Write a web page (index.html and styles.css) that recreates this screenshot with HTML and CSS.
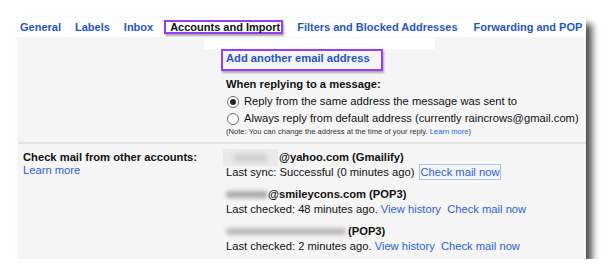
FILE: index.html
```html
<!DOCTYPE html>
<html lang="en">
<head>
    <meta charset="UTF-8">
    <meta name="viewport" content="width=device-width, initial-scale=1.0">
    <title>Settings - Accounts and Import</title>
    <link rel="stylesheet" href="styles.css">
</head>
<body>
    <div class="panel">
        <!-- settings tabs -->
        <div class="tabs">
            <a class="tab">General</a>
            <a class="tab">Labels</a>
            <a class="tab">Inbox</a>
            <a class="tab tab-active">Accounts and Import</a>
            <a class="tab">Filters and Blocked Addresses</a>
            <a class="tab tab-last">Forwarding and POP</a>
        </div>

        <div class="content">
            <div class="strip"></div>

            <!-- reply settings -->
            <div class="section section-reply">
                <div class="label-cell"></div>
                <div class="value-cell">
                    <a class="add-address">Add another email address</a>
                    <div class="heading heading-reply">When replying to a message:</div>
                    <div class="radio-row"><span class="radio checked"></span>Reply from the same address the message was sent to</div>
                    <div class="radio-row"><span class="radio"></span>Always reply from default address (currently raincrows@gmail.com)</div>
                    <div class="note">(Note: You can change the address at the time of your reply. <a class="link">Learn more</a>)</div>
                </div>
            </div>

            <!-- other accounts -->
            <div class="section section-accounts">
                <div class="label-cell">
                    <div class="heading heading-accounts">Check mail from other accounts:</div>
                    <a class="link">Learn more</a>
                </div>
                <div class="value-cell">
                    <div class="account">
                        <div class="account-name"><span class="redact redact-yahoo"><span class="blob"></span></span>@yahoo.com (Gmailify)</div>
                        <div class="account-status">Last sync: Successful (0 minutes ago) <a class="link link-boxed">Check mail now</a></div>
                    </div>
                    <div class="account">
                        <div class="account-name"><span class="redact redact-smiley"><span class="blob"></span></span>@smileycons.com (POP3)</div>
                        <div class="account-status">Last checked: 48 minutes ago. <a class="link">View history</a>&nbsp; <a class="link">Check mail now</a></div>
                    </div>
                    <div class="account">
                        <div class="account-name"><span class="redact redact-thunder"><span class="blob"></span></span>(POP3)</div>
                        <div class="account-status">Last checked: 2 minutes ago. <a class="link">View history</a>&nbsp; <a class="link">Check mail now</a></div>
                    </div>
                </div>
            </div>
        </div>
    </div>
</body>
</html>
```

FILE: styles.css
```css
body {
    margin: 0;
    background-color: #ffffff;
    font-family: "Liberation Sans", Arial, sans-serif;
    font-size: 11.2px;
    color: #111111;
}
a {
    cursor: pointer;
}
.panel {
    width: 568px;
    margin: 18px 0 0 18px;
    background-color: #f5f5f5;
    box-shadow: 6px 6px 7px rgba(0, 0, 0, 0.7);
}
.tabs {
    display: flex;
    align-items: center;
    gap: 14px;
    height: 19px;
    padding-left: 2px;
    background-color: #ffffff;
    white-space: nowrap;
    overflow: hidden;
}
.tab {
    font-size: 11px;
    font-weight: bold;
    color: #1f55c6;
    line-height: 19px;
}
.tab-active {
    color: #111111;
    line-height: 10px;
    margin-left: -3px;
    margin-top: -2px;
    padding: 0 1px 0 4px;
    border: 2px solid #9a3cf0;
    box-shadow: 1px 2px 2px rgba(0, 0, 0, 0.35);
}
.tab-last {
    margin-left: 2px;
}
.content {
    padding-top: 1px;
}
.strip {
    width: 231px;
    height: 11px;
    margin-left: 186px;
    background-color: #ffffff;
}
.section {
    display: grid;
    grid-template-columns: 208px 1fr;
}
.label-cell {
    padding-left: 5px;
}
.heading {
    font-weight: bold;
    line-height: 16px;
}
.link {
    color: #2b5fd4;
}
.section-reply {
    padding-bottom: 6px;
}
.add-address {
    display: inline-block;
    margin-left: -5px;
    padding: 1px 11px 5px 3px;
    border: 2px solid #9a3cf0;
    box-shadow: 1px 2px 2px rgba(0, 0, 0, 0.3);
    font-weight: bold;
    color: #1f55c6;
    line-height: 12px;
}
.heading-reply {
    margin-top: 5px;
    line-height: 17px;
}
.radio-row {
    display: flex;
    align-items: center;
    line-height: 17px;
}
.radio {
    width: 10px;
    height: 10px;
    margin: 0 5px 0 1px;
    border: 1px solid #6a6a6a;
    border-radius: 50%;
    background-color: #ffffff;
    position: relative;
}
.radio.checked::after {
    content: "";
    position: absolute;
    left: 2px;
    top: 2px;
    width: 6px;
    height: 6px;
    border-radius: 50%;
    background-color: #222222;
}
.note {
    font-size: 7.6px;
    line-height: 9px;
    color: #333333;
}
.section-accounts {
    border-top: 2px solid #e2e2e2;
    padding: 6px 0 0;
}
.heading-accounts {
    line-height: 13px;
    margin-top: 1px;
}
.account {
    margin-bottom: 7px;
    line-height: 15px;
}
.account:last-child {
    margin-bottom: 5px;
}
.account-name {
    font-weight: bold;
}
.redact {
    display: inline-block;
    vertical-align: middle;
    height: 8px;
    position: relative;
}
.blob {
    position: absolute;
    border-radius: 4px;
    filter: blur(2px);
}
.redact-yahoo {
    width: 55px;
    margin: 0 1px 0 -3px;
}
.redact-yahoo::before {
    content: "";
    position: absolute;
    left: 0;
    top: -5px;
    width: 55px;
    height: 17px;
    background-color: #e9e9e9;
}
.redact-yahoo .blob {
    left: 10px;
    top: 0;
    width: 34px;
    height: 8px;
    background-color: #cfcfcf;
}
.redact-smiley {
    width: 42px;
}
.redact-smiley .blob {
    left: 0;
    top: 0;
    width: 42px;
    height: 7px;
    background-color: #a9a9a9;
}
.redact-thunder {
    width: 122px;
}
.redact-thunder .blob {
    left: 0;
    top: 0;
    width: 120px;
    height: 7px;
    background-color: #b9b9b9;
}
.link-boxed {
    margin-left: 1px;
    padding: 1px 1px;
    border: 1px solid #a9c3ea;
}
```
